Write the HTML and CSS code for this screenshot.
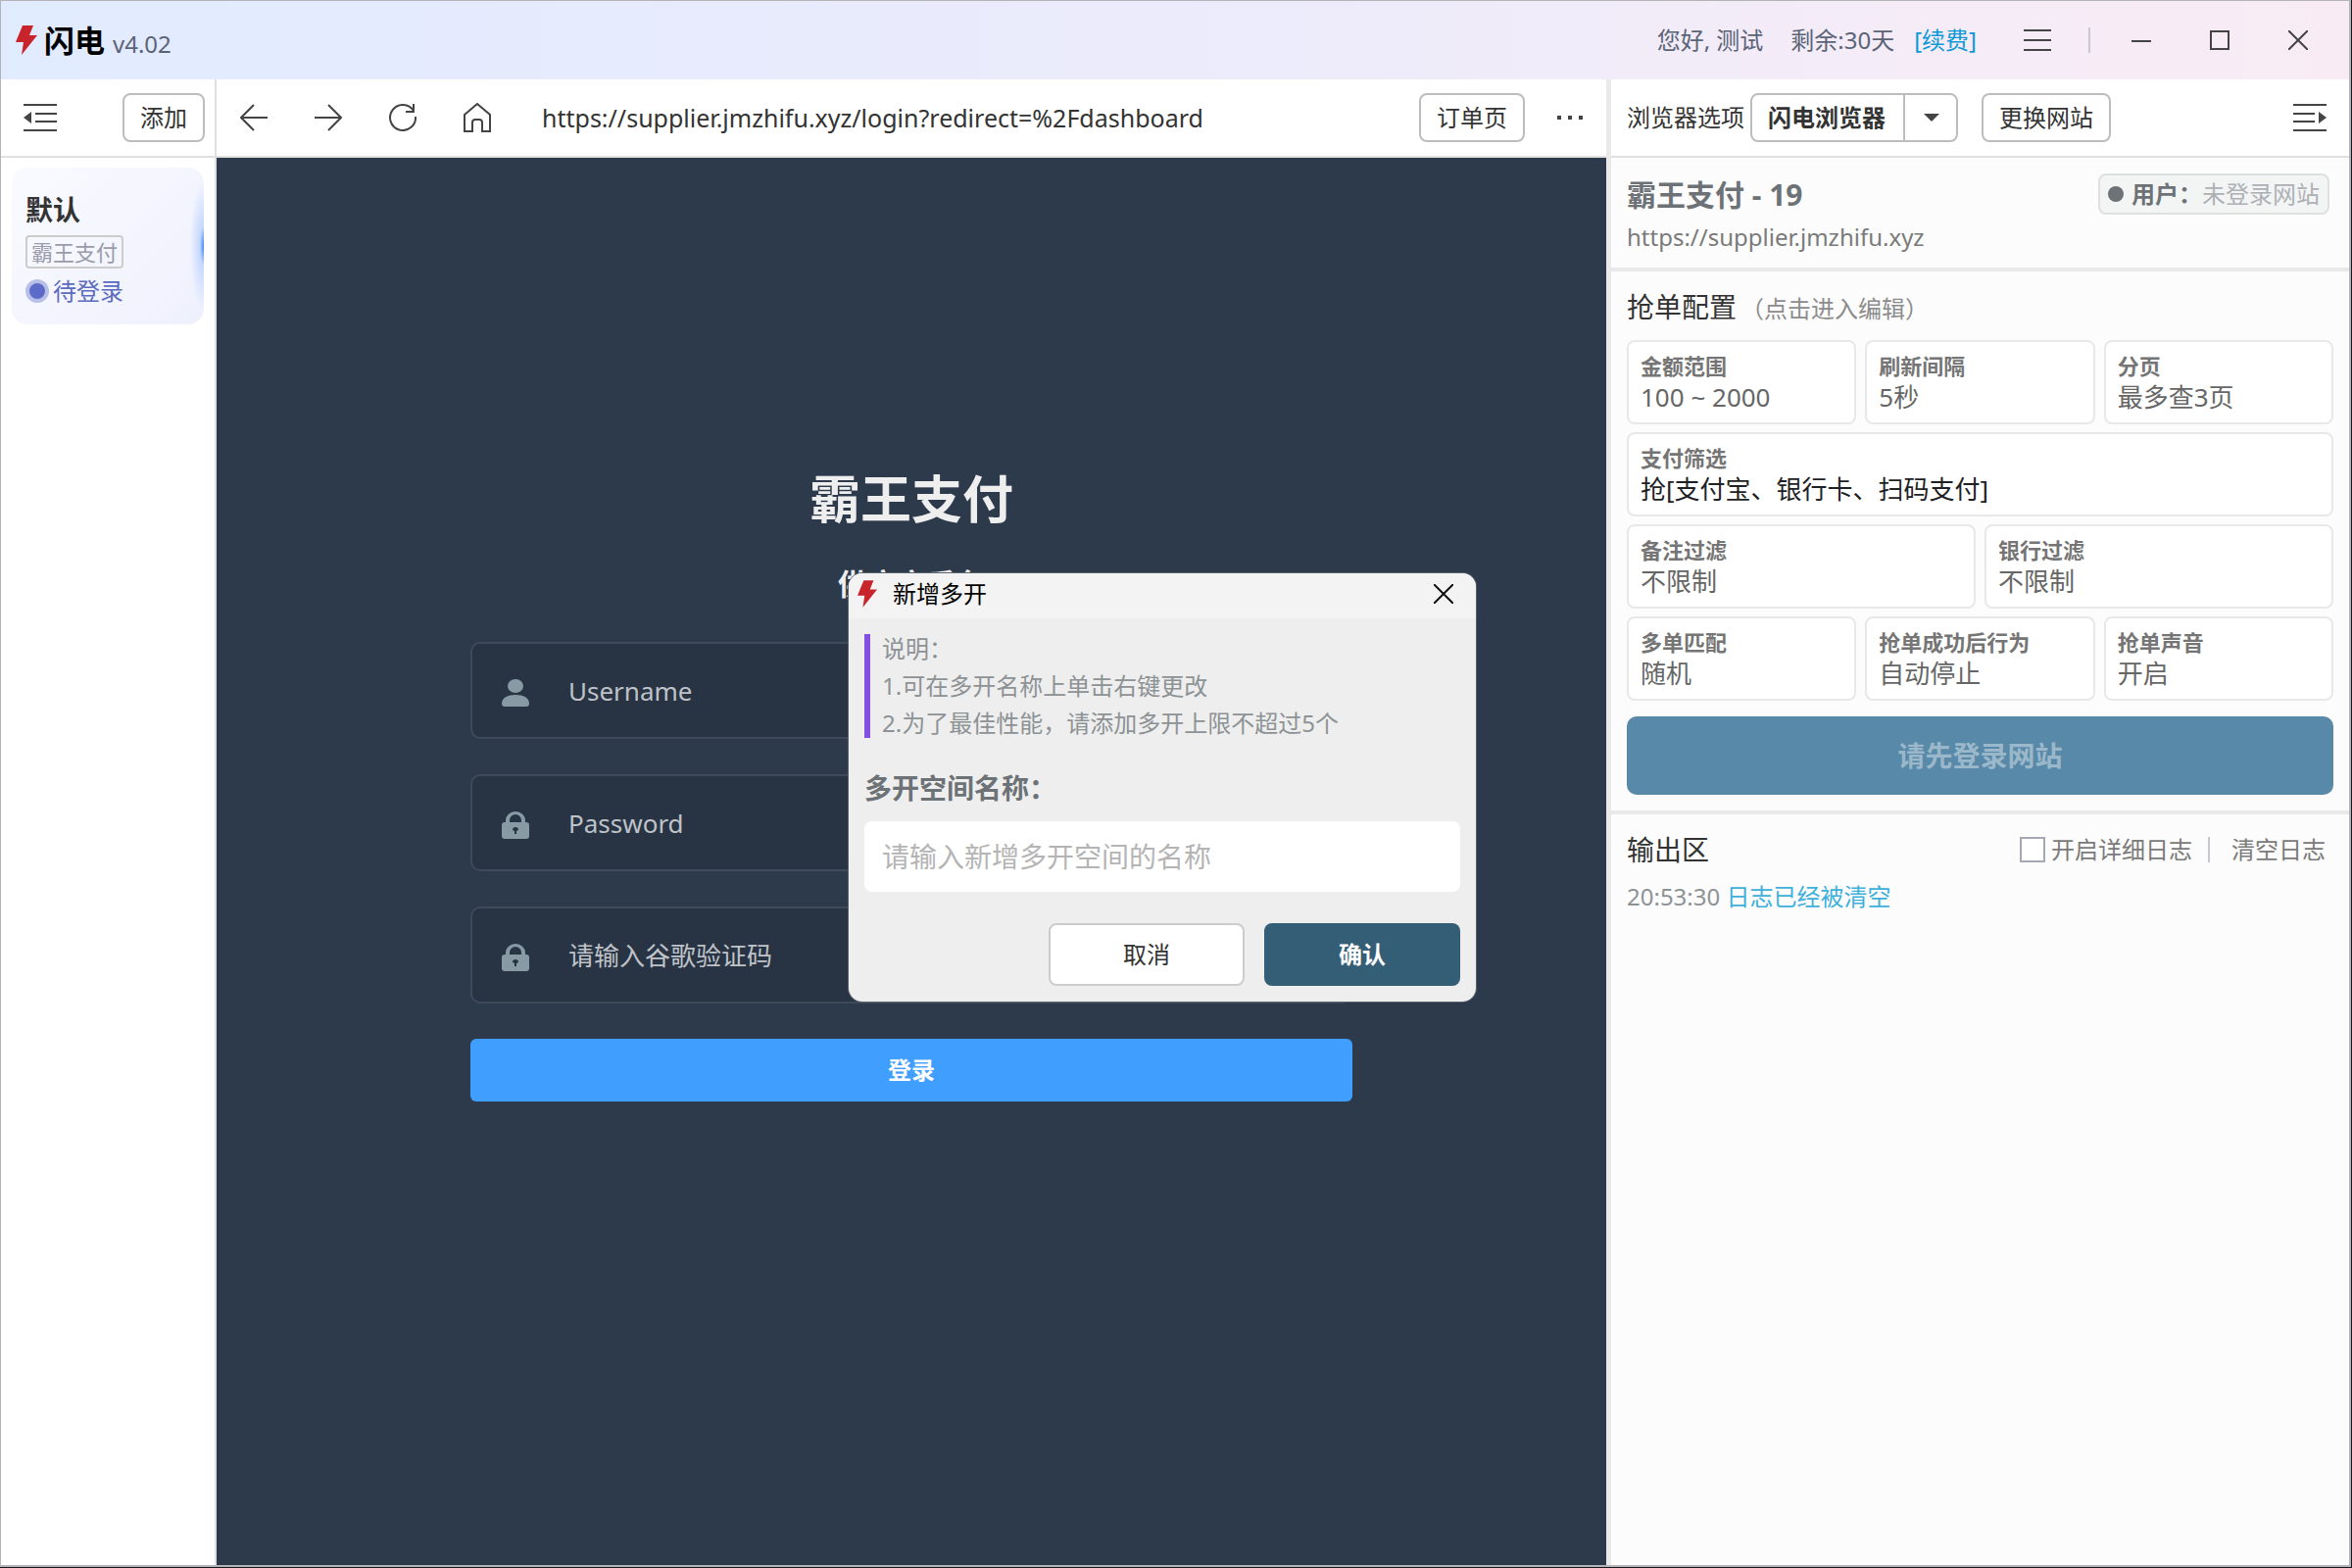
FILE: index.html
```html
<!DOCTYPE html>
<html lang="zh-CN">
  <head>
    <meta charset="utf-8" />
    <meta name="viewport" content="width=device-width, initial-scale=1" />
    <title>闪电</title>
    <link rel="stylesheet" href="styles.css">
  </head>
  <body>
    <div class="window">
      <header class="titlebar">
        <div class="brand">
          <svg class="bolt" viewBox="0 0 22 30"><path d="M7 0h11l-4 10h8L6 30l2-13H0z" fill="#c7252b" /></svg>
          <b>闪电</b>
          <span>v4.02</span>
        </div>
        <div class="account">
          <span>您好, 测试</span>
          <span>剩余:30天</span>
          <a href="#renew">[续费]</a>
        </div>
        <div class="win-buttons">
          <button type="button" aria-label="菜单">
            <svg width="28" height="24" viewBox="0 0 28 24"><path d="M0 2h28M0 12h28M0 22h28" /></svg>
          </button>
          <i class="sep"></i>
          <button type="button" aria-label="最小化">
            <svg width="20" height="20" viewBox="0 0 20 20"><path d="M0 11h20" /></svg>
          </button>
          <button type="button" aria-label="最大化">
            <svg width="20" height="20" viewBox="0 0 20 20"><path d="M1 1h18v18H1z" /></svg>
          </button>
          <button type="button" aria-label="关闭">
            <svg width="20" height="20" viewBox="0 0 20 20"><path d="M0 0l20 20M20 0L0 20" /></svg>
          </button>
        </div>
      </header>

      <div class="columns">
        <aside class="sidebar">
          <div class="toolbar">
            <button class="icon" type="button" aria-label="收起">
              <svg width="34" height="28" viewBox="0 0 34 28"><path d="M0 1h34M12 10h22M12 18h22M0 27h34" /><path class="solid" d="M8 8v12L0 14z" /></svg>
            </button>
            <button class="btn" type="button">添加</button>
          </div>
          <div class="space">
            <h2>默认</h2>
            <span class="tag">霸王支付</span>
            <p><i class="dot"></i>待登录</p>
          </div>
        </aside>

        <main class="browser">
          <div class="toolbar">
            <nav class="nav">
              <button class="icon" type="button" aria-label="后退">
                <svg width="28" height="28" viewBox="0 0 28 28"><path d="M14 1L1 14l13 13M1 14h27" /></svg>
              </button>
              <button class="icon" type="button" aria-label="前进">
                <svg width="28" height="28" viewBox="0 0 28 28"><path d="M14 1l13 13-13 13M27 14H0" /></svg>
              </button>
              <button class="icon" type="button" aria-label="刷新">
                <svg width="28" height="28" viewBox="0 0 28 28"><path d="M25 7A13 13 0 1 0 27 13M25 0v8h-8" /></svg>
              </button>
              <button class="icon" type="button" aria-label="主页">
                <svg width="28" height="30" viewBox="0 0 28 30"><path d="M1 12L14 1l13 11v17h-8v-9q0-3-3-3h-4q-3 0-3 3v9H1z" /></svg>
              </button>
            </nav>
            <span class="url">https://supplier.jmzhifu.xyz/login?redirect=%2Fdashboard</span>
            <button class="btn" type="button">订单页</button>
            <button class="icon more" type="button" aria-label="更多">
              <svg width="26" height="4" viewBox="0 0 26 4"><path class="solid" d="M0 0h4v4H0zM11 0h4v4h-4zM22 0h4v4h-4z" /></svg>
            </button>
          </div>

          <div class="page">
            <form class="login">
              <h1>霸王支付</h1>
              <h3>供应商后台</h3>
              <label class="field">
                <svg width="28" height="28" viewBox="0 0 28 28"><ellipse cx="14" cy="7" rx="8" ry="7" /><path d="M0 25c0-6 6-9 14-9s14 3 14 9q0 3-3 3H3q-3 0-3-3z" /></svg>
                <input type="text" placeholder="Username" />
              </label>
              <label class="field">
                <svg width="28" height="28" viewBox="0 0 28 28"><path d="M4 11V9a10 9 0 0 1 20 0v2h1q3 0 3 3v11q0 3-3 3H3q-3 0-3-3V14q0-3 3-3zM8 11h12V9a6 6 0 0 0-12 0zM13 20v3h2v-3a3 2 0 1 0-2 0z" fill-rule="evenodd" /></svg>
                <input type="password" placeholder="Password" />
              </label>
              <label class="field">
                <svg width="28" height="28" viewBox="0 0 28 28"><path d="M4 11V9a10 9 0 0 1 20 0v2h1q3 0 3 3v11q0 3-3 3H3q-3 0-3-3V14q0-3 3-3zM8 11h12V9a6 6 0 0 0-12 0zM13 20v3h2v-3a3 2 0 1 0-2 0z" fill-rule="evenodd" /></svg>
                <input type="text" placeholder="请输入谷歌验证码" />
              </label>
              <button class="submit" type="button">登录</button>
            </form>

            <div class="modal" role="dialog" aria-labelledby="modal-title">
              <div class="modal-head">
                <svg class="bolt" viewBox="0 0 22 30"><path d="M7 0h11l-4 10h8L6 30l2-13H0z" fill="#c7252b" /></svg>
                <span id="modal-title">新增多开</span>
                <button type="button" aria-label="关闭">
                  <svg width="20" height="20" viewBox="0 0 20 20"><path d="M0 0l20 20M20 0L0 20" /></svg>
                </button>
              </div>
              <div class="modal-body">
                <div class="note">
                  <p>说明：</p>
                  <p>1.可在多开名称上单击右键更改</p>
                  <p>2.为了最佳性能，请添加多开上限不超过5个</p>
                </div>
                <label for="space-name">多开空间名称：</label>
                <input id="space-name" type="text" placeholder="请输入新增多开空间的名称" />
                <div class="actions">
                  <button type="button">取消</button>
                  <button class="primary" type="button">确认</button>
                </div>
              </div>
            </div>
          </div>
        </main>

        <aside class="panel">
          <div class="toolbar">
            <span class="option-label">浏览器选项</span>
            <div class="split">
              <button type="button">闪电浏览器</button>
              <button type="button" aria-label="选择浏览器">
                <svg width="16" height="8" viewBox="0 0 16 8"><path class="solid" d="M0 0h16L8 8z" /></svg>
              </button>
            </div>
            <button class="btn" type="button">更换网站</button>
            <button class="icon" type="button" aria-label="收起">
              <svg width="34" height="28" viewBox="0 0 34 28"><path d="M0 1h34M0 10h22M0 18h22M0 27h34" /><path class="solid" d="M26 8v12l8-6z" /></svg>
            </button>
          </div>

          <section class="site">
            <div>
              <h2>霸王支付 - 19</h2>
              <p>https://supplier.jmzhifu.xyz</p>
            </div>
            <div class="user"><i></i><b>用户：</b><span>未登录网站</span></div>
          </section>

          <section class="config">
            <h3>抢单配置<small>（点击进入编辑）</small></h3>
            <div class="cards">
              <button class="third" type="button"><b>金额范围</b><span>100 ~ 2000</span></button>
              <button class="third" type="button"><b>刷新间隔</b><span>5秒</span></button>
              <button class="third" type="button"><b>分页</b><span>最多查3页</span></button>
              <button class="full" type="button"><b>支付筛选</b><span>抢[支付宝、银行卡、扫码支付]</span></button>
              <button class="half" type="button"><b>备注过滤</b><span>不限制</span></button>
              <button class="half" type="button"><b>银行过滤</b><span>不限制</span></button>
              <button class="third" type="button"><b>多单匹配</b><span>随机</span></button>
              <button class="third" type="button"><b>抢单成功后行为</b><span>自动停止</span></button>
              <button class="third" type="button"><b>抢单声音</b><span>开启</span></button>
            </div>
            <button class="start" type="button" disabled>请先登录网站</button>
          </section>

          <section class="output">
            <div class="output-head">
              <h3>输出区</h3>
              <label><input type="checkbox" />开启详细日志</label>
              <i class="sep"></i>
              <button type="button">清空日志</button>
            </div>
            <p class="log"><time>20:53:30</time> 日志已经被清空</p>
          </section>
        </aside>
      </div>
    </div>
  </body>
</html>
```

FILE: styles.css
```css
* {
  box-sizing: border-box;
}

body {
  margin: 0;
  background-color: #15181c;
  font-family: "Noto Sans", "Noto Sans CJK SC", sans-serif;
  font-size: 24px;
  line-height: 32px;
  color: #333;
}

h1,
h2,
h3,
p {
  margin: 0;
}

i {
  display: block;
}

button,
input {
  font: inherit;
  color: inherit;
}

button {
  padding: 0;
  border: 0;
  background: none;
}

input {
  border: 0;
  outline: 0;
  padding: 0;
  background: none;
}

svg {
  display: block;
  fill: none;
  stroke: #444;
  stroke-width: 2;
}

.solid {
  fill: #444;
  stroke: none;
}

.bolt {
  width: 22px;
  height: 30px;
  stroke: none;
}

.sep {
  width: 2px;
  height: 26px;
  background-color: #c8c8d0;
}

.window {
  display: flex;
  flex-direction: column;
  height: calc(100vh - 1px);
  margin-right: 1px;
  border: 1px solid #b4b4b8;
  border-width: 1px 2px 2px 1px;
  background-color: #fff;
}

/* title bar */
.titlebar {
  display: flex;
  align-items: center;
  height: 80px;
  padding: 0 42px 0 15px;
  background: linear-gradient(90deg, #e1ebff, #ebebfb 50%, #f3ecf8 75%, #f8ebf4);
}

.brand {
  display: flex;
  align-items: center;
  flex: 1;
}

.brand b {
  margin: 0 8px 0 7px;
  font-size: 31px;
  color: #000;
}

.brand span {
  padding-top: 8px;
  color: #5b6377;
}

.account {
  display: flex;
  gap: 28px;
  color: #5b6377;
}

.account a {
  margin-left: -8px;
  color: #0d99d6;
  text-decoration: none;
}

.win-buttons {
  display: flex;
  align-items: center;
  margin-left: 48px;
}

.win-buttons .sep {
  margin: 0 42px 0 38px;
}

.win-buttons button + button {
  margin-left: 60px;
}

/* columns */
.columns {
  display: grid;
  grid-template-columns: 220px 1fr 758px;
  flex: 1;
}

.toolbar {
  display: flex;
  align-items: center;
  height: 80px;
  border-bottom: 2px solid #e0e0e0;
  background-color: #fff;
}

.btn {
  height: 50px;
  padding: 0 16px;
  border: 2px solid #bdbdbd;
  border-radius: 8px;
}

.sidebar {
  border-right: 2px solid #e0e0e0;
}

.sidebar .toolbar {
  justify-content: space-between;
  padding: 0 10px 0 23px;
}

.space {
  height: 160px;
  margin: 10px 11px 0;
  padding: 24px 14px;
  border-radius: 16px;
  background:
    radial-gradient(ellipse 14px 66px at 100% 50%, #3f86f8, #c5d8fd 30%, transparent),
    linear-gradient(135deg, #fafbff, #eef0fd);
}

.space h2 {
  font-size: 28px;
  line-height: 38px;
}

.tag {
  display: inline-block;
  margin: 7px 0 9px;
  padding: 0 4px;
  border: 2px solid #ccc;
  border-radius: 4px;
  font-size: 22px;
  line-height: 30px;
  color: #9a9bab;
}

.space p {
  display: flex;
  align-items: center;
  gap: 4px;
  line-height: 28px;
  color: #5c6bc0;
}

.dot {
  width: 24px;
  height: 24px;
  border: 4px solid #b9c0e8;
  border-radius: 50%;
  background-color: #5c6bc8;
}

/* browser */
.browser {
  display: flex;
  flex-direction: column;
}

.nav {
  display: flex;
  align-items: center;
  gap: 48px;
  padding-left: 24px;
}

.url {
  flex: 1;
  margin-left: 52px;
  font-size: 25px;
}

.more {
  margin: 0 24px 0 33px;
}

.page {
  position: relative;
  flex: 1;
  background-color: #2d3a4b;
}

.login {
  display: flex;
  flex-direction: column;
  width: 900px;
  margin: 0 auto;
  padding-top: 310px;
  color: #eee;
}

.login h1 {
  font-size: 52px;
  line-height: 76px;
  text-align: center;
}

.login h3 {
  margin: 27px 0 37px;
  font-size: 30px;
  line-height: 44px;
  text-align: center;
}

.field {
  display: flex;
  align-items: center;
  gap: 40px;
  height: 99px;
  margin-bottom: 36px;
  padding: 0 30px;
  border: 2px solid #3e4a59;
  border-radius: 10px;
  background-color: #283443;
}

.field svg {
  margin-top: 4px;
  fill: #889aa4;
  stroke: none;
}

.field input {
  flex: 1;
  font-size: 26px;
}

.field input::placeholder {
  color: #bfc3c9;
}

.submit {
  height: 64px;
  border-radius: 6px;
  background-color: #409eff;
  font-weight: bold;
  color: #fff;
}

/* dialog over the page */
.modal {
  position: absolute;
  top: 424px;
  left: calc(50% - 64px);
  width: 640px;
  border-radius: 14px;
  overflow: hidden;
  background-color: #eee;
  box-shadow: 0 0 0 1px #5a626c;
}

.modal-head {
  display: flex;
  align-items: center;
  height: 46px;
  padding: 0 23px 4px 9px;
  background-color: #f3f3f3;
  color: #000;
}

.modal-head svg {
  stroke: #111;
}

.modal-head .bolt {
  width: 20px;
  height: 28px;
  stroke: none;
}

.modal-head span {
  flex: 1;
  margin-left: 16px;
}

.modal-body {
  padding: 16px;
}

.note {
  display: grid;
  gap: 8px;
  padding-left: 12px;
  border-left: 6px solid #8250df;
  line-height: 30px;
  color: #8d9295;
}

.modal-body label {
  display: block;
  margin: 31px 0 14px;
  font-size: 28px;
  line-height: 40px;
  font-weight: bold;
  color: #6c7276;
}

.modal-body input {
  width: 100%;
  height: 72px;
  padding: 0 18px;
  border-radius: 8px;
  background-color: #fff;
  font-size: 28px;
}

.modal-body input::placeholder {
  color: #b4b4b4;
}

.actions {
  display: flex;
  justify-content: flex-end;
  gap: 20px;
  margin-top: 32px;
}

.actions button {
  width: 200px;
  height: 64px;
  border: 2px solid #ccc;
  border-radius: 8px;
  background-color: #fff;
}

.actions .primary {
  border: 0;
  background-color: #345e75;
  font-weight: bold;
  color: #fff;
}

/* right panel */
.panel {
  border-left: 5px solid #e9e9e9;
  background-color: #fcfcfc;
}

.panel .toolbar {
  padding: 0 23px 0 16px;
}

.panel .toolbar .icon {
  margin-left: auto;
}

.split {
  display: flex;
  height: 50px;
  margin: 0 24px 0 6px;
  border: 2px solid #bdbdbd;
  border-radius: 8px;
}

.split button {
  padding: 0 18px 0 16px;
  font-weight: bold;
}

.split button + button {
  padding: 0 17px 0 19px;
  border-left: 2px solid #bdbdbd;
}

.site {
  display: flex;
  justify-content: space-between;
  align-items: flex-start;
  height: 116px;
  padding: 16px 20px 0 16px;
  border-bottom: 4px solid #e9e9e9;
  color: #7a7a7a;
}

.site h2 {
  font-size: 30px;
  line-height: 44px;
  color: #6c7276;
}

.site p {
  line-height: 42px;
}

.user {
  display: flex;
  align-items: center;
  height: 42px;
  padding: 0 8px;
  border: 2px solid #dfe1e1;
  border-radius: 8px;
  background-color: #f3f5f5;
  color: #adb1b5;
}

.user i {
  width: 16px;
  height: 16px;
  margin-right: 8px;
  border-radius: 50%;
  background-color: #6c7276;
}

.user b {
  color: #6c7276;
}

.config {
  padding: 12px 16px 16px;
  border-bottom: 4px solid #e9e9e9;
}

.panel h3 {
  font-size: 28px;
  font-weight: normal;
  line-height: 48px;
  color: #333;
}

.config small {
  margin-left: 4px;
  font-size: 24px;
  color: #8c8c8c;
}

.cards {
  display: grid;
  grid-template-columns: repeat(6, 1fr);
  gap: 8px 9px;
  margin: 8px 0 16px;
}

.cards button {
  display: flex;
  flex-direction: column;
  height: 86px;
  padding: 8px 12px;
  border: 2px solid #e8e8e8;
  border-radius: 8px;
  background-color: #fff;
  text-align: left;
}

.cards b {
  font-size: 22px;
  color: #757575;
}

.cards span {
  font-size: 26px;
  color: #666;
}

.third {
  grid-column: span 2;
}

.half {
  grid-column: span 3;
}

.full {
  grid-column: span 6;
}

.cards .full span {
  color: #1f2225;
}

.start {
  width: 100%;
  height: 80px;
  border-radius: 10px;
  background-color: #5889a8;
  font-size: 28px;
  font-weight: bold;
  color: #9bb8ca;
}

.output {
  padding: 12px 24px 0 16px;
}

.output-head {
  display: flex;
  align-items: center;
  color: #7a7a7a;
}

.output-head h3 {
  flex: 1;
}

.output-head label {
  display: flex;
  align-items: center;
  gap: 6px;
}

.output-head input {
  appearance: none;
  width: 26px;
  height: 26px;
  margin: 0;
  border: 2px solid #a6a9b3;
  background-color: #fff;
}

.output-head .sep {
  margin: 0 22px 0 16px;
}

.log {
  margin-top: 8px;
  color: #3fb0da;
}

.log time {
  color: #8d9295;
}
```
